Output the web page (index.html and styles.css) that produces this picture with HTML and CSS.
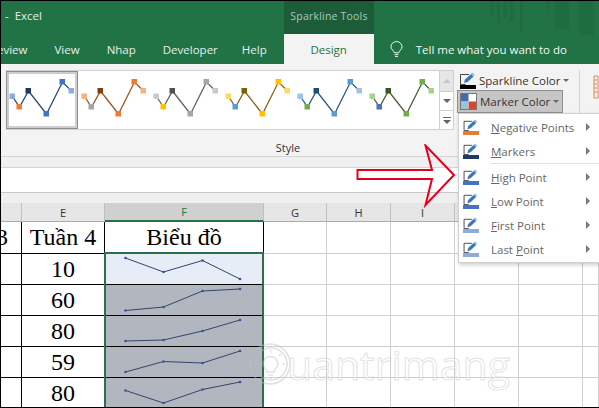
FILE: index.html
```html
<!DOCTYPE html>
<html lang="en">
<head>
  <meta charset="UTF-8" />
  <title>Excel - Marker Color</title>
  <link rel="stylesheet" href="styles.css">
</head>
<body>

  <svg class="defs" width="0" height="0">
    <symbol id="gallery-line" viewBox="0 0 72 56">
      <polyline class="g-line" points="6.500,24.500 13.500,35 22.500,19 40.500,42 56.500,10 65.500,19" />
      <rect class="g-first" x="3.500" y="21.500" width="5.500" height="5.500" />
      <rect class="g-neg" x="10.500" y="32" width="5.500" height="5.500" />
      <rect class="g-mark" x="19.500" y="16" width="5.500" height="5.500" />
      <rect class="g-low" x="37.500" y="39" width="5.500" height="5.500" />
      <rect class="g-low" x="53.500" y="7" width="5.500" height="5.500" />
      <rect class="g-last" x="62.500" y="16" width="5.500" height="5.500" />
    </symbol>
    <symbol id="pencil" viewBox="0 0 16 13">
      <path class="frame" d="M9 2.500H.5v10h5" />
      <path class="nib" d="M4 11l1-3.500 6-5.500 2.600 2.400-6 5.500z" />
      <path class="tip" d="M11 1.500l1-1 2.800 2.300-1 1.300z" />
    </symbol>
  </svg>

  <div class="titlebar">
    <span class="app-name">- &nbsp;Excel</span>
    <div class="tools-label">Sparkline Tools</div>
    <svg class="stripes" width="110" height="34" viewBox="0 0 110 34">
      <path d="M1 0h4v16H1zM8 0h3v22H8zM14 0h4v17h-4zM21 0h4v20h-4zM31 0h3v32h-3zM50 0h6l5 13V0zM66 0h14v28H66zM90 0h15v34H90z" />
    </svg>
  </div>

  <div class="tabs">
    <span class="tab tab-review">eview</span>
    <span class="tab tab-view">View</span>
    <span class="tab tab-nhap">Nhap</span>
    <span class="tab tab-dev">Developer</span>
    <span class="tab tab-help">Help</span>
    <span class="tab tab-design">Design</span>
    <svg class="bulb" width="13" height="17" viewBox="0 0 14 18">
      <path d="M4.500 12.500c0-2-3.500-3.500-3.500-6.500a6 5.500 0 0 1 12 0c0 3-3.500 4.500-3.500 6.500zM5 14.500h4M5.500 16.500h3" />
    </svg>
    <span class="tab tab-tell">Tell me what you want to do</span>
  </div>

  <div class="ribbon">
    <div class="ribbon-main">
      <div class="gallery">
        <div class="gallery-item selected"><svg class="blue-dark" width="72" height="56"><use href="#gallery-line" /></svg></div>
        <div class="gallery-item"><svg class="brown" width="72" height="56"><use href="#gallery-line" /></svg></div>
        <div class="gallery-item"><svg class="grey" width="72" height="56"><use href="#gallery-line" /></svg></div>
        <div class="gallery-item"><svg class="gold" width="72" height="56"><use href="#gallery-line" /></svg></div>
        <div class="gallery-item"><svg class="blue" width="72" height="56"><use href="#gallery-line" /></svg></div>
        <div class="gallery-item"><svg class="green" width="72" height="56"><use href="#gallery-line" /></svg></div>
        <div class="gallery-scroll">
          <div class="scroll-btn up"><span class="tri-up"></span></div>
          <div class="scroll-btn"><span class="tri-down"></span></div>
          <div class="scroll-btn more"><span class="more-bar"></span><span class="tri-down"></span></div>
        </div>
      </div>
      <div class="color-buttons">
        <div class="color-btn">
          <svg class="btn-icon" width="16" height="17" viewBox="0 0 16 17">
            <use href="#pencil" width="16" height="13" />
            <rect y="13" width="16" height="4" fill="#000" />
          </svg>
          <span>Sparkline Color</span><i class="caret"></i>
        </div>
        <div class="color-btn active">
          <svg class="btn-icon" width="17" height="17" viewBox="0 0 17 17">
            <rect x=".5" y=".5" width="16" height="16" fill="#fff" stroke="#777" />
            <rect x="1" y="1" width="7.500" height="7.500" fill="#3f6cad" />
            <rect x="8.500" y="8.500" width="7.500" height="7.500" fill="#d9472b" />
            <rect x="1" y="8.500" width="7.500" height="7.500" fill="#9fc1de" />
          </svg>
          <span>Marker Color</span><i class="caret"></i>
        </div>
      </div>
      <svg class="next-group" width="8" height="24" viewBox="0 0 8 24">
        <path d="M1 1h4v22H1zM1 5h3M1 9h3M1 13h3M1 17h3" />
      </svg>
    </div>
    <div class="group-label">Style</div>
  </div>

  <div class="formula-bar"></div>
  <div class="header-gap"></div>

  <div class="sheet">
    <div class="col-head"></div>
    <div class="col-head">E</div>
    <div class="col-head col-active">F</div>
    <div class="col-head">G</div>
    <div class="col-head">H</div>
    <div class="col-head">I</div>
    <div class="col-head"></div>
    <div class="col-head"></div>
    <div class="col-head col-last"></div>

    <div class="cell data clip-left"><span>Tuần 3</span></div>
    <div class="cell data">Tuần 4</div>
    <div class="cell data">Biểu đồ</div>
    <div class="cell"></div><div class="cell"></div><div class="cell"></div><div class="cell"></div><div class="cell"></div><div class="cell col-last"></div>

    <div class="cell data"></div>
    <div class="cell data">10</div>
    <div class="cell data spark first-spark">
      <svg width="158" height="30"><polyline points="20.500,4 58.500,18 97.500,6.500 135,25" /><circle cx="20.500" cy="4" r="1.300" /><circle cx="58.500" cy="18" r="1.300" /><circle cx="97.500" cy="6.500" r="1.300" /><circle cx="135" cy="25" r="1.300" /></svg>
    </div>
    <div class="cell"></div><div class="cell"></div><div class="cell"></div><div class="cell"></div><div class="cell"></div><div class="cell col-last"></div>

    <div class="cell data"></div>
    <div class="cell data">60</div>
    <div class="cell data spark">
      <svg width="158" height="30"><polyline points="20.500,25.500 58.500,22 97.500,6 135,4" /><circle cx="20.500" cy="25.500" r="1.300" /><circle cx="58.500" cy="22" r="1.300" /><circle cx="97.500" cy="6" r="1.300" /><circle cx="135" cy="4" r="1.300" /></svg>
    </div>
    <div class="cell"></div><div class="cell"></div><div class="cell"></div><div class="cell"></div><div class="cell"></div><div class="cell col-last"></div>

    <div class="cell data"></div>
    <div class="cell data">80</div>
    <div class="cell data spark">
      <svg width="158" height="30"><polyline points="20.500,25 58.500,24 97.500,15 135,4" /><circle cx="20.500" cy="25" r="1.300" /><circle cx="58.500" cy="24" r="1.300" /><circle cx="97.500" cy="15" r="1.300" /><circle cx="135" cy="4" r="1.300" /></svg>
    </div>
    <div class="cell"></div><div class="cell"></div><div class="cell"></div><div class="cell"></div><div class="cell"></div><div class="cell col-last"></div>

    <div class="cell data"></div>
    <div class="cell data">59</div>
    <div class="cell data spark">
      <svg width="158" height="30"><polyline points="20.500,25 58.500,14.500 97.500,16 135,4" /><circle cx="20.500" cy="25" r="1.300" /><circle cx="58.500" cy="14.500" r="1.300" /><circle cx="97.500" cy="16" r="1.300" /><circle cx="135" cy="4" r="1.300" /></svg>
    </div>
    <div class="cell"></div><div class="cell"></div><div class="cell"></div><div class="cell"></div><div class="cell"></div><div class="cell col-last"></div>

    <div class="cell data"></div>
    <div class="cell data">80</div>
    <div class="cell data spark">
      <svg width="158" height="30"><polyline points="20.500,12.500 58.500,25 97.500,11.500 135,4" /><circle cx="20.500" cy="12.500" r="1.300" /><circle cx="58.500" cy="25" r="1.300" /><circle cx="97.500" cy="11.500" r="1.300" /><circle cx="135" cy="4" r="1.300" /></svg>
    </div>
    <div class="cell"></div><div class="cell"></div><div class="cell"></div><div class="cell"></div><div class="cell"></div><div class="cell col-last"></div>
  </div>

  <div class="selection"></div>

  <div class="watermark">
    <svg width="44" height="46" viewBox="0 0 44 46">
      <circle cx="22" cy="23" r="20" />
      <circle cx="23" cy="23" r="16" />
      <path d="M19 31c0-3-4-4-4-8a7.500 7.500 0 0 1 15 0c0 4-4 5-4 8zM20 34h5M21 37h3M22.500 9v3M33 13l-2 2M37 23h-3M12 13l2 2M8 23h3" />
    </svg>
    <span>uantrimang</span>
  </div>

  <div class="menu">
    <div class="menu-item"><svg width="16" height="16" viewBox="0 0 16 16"><use href="#pencil" width="16" height="12" /><rect class="swatch-orange" y="12" width="16" height="4" /></svg><span><u>N</u>egative Points</span><i class="submenu"></i></div>
    <div class="menu-item"><svg width="16" height="16" viewBox="0 0 16 16"><use href="#pencil" width="16" height="12" /><rect class="swatch-navy" y="12" width="16" height="4" /></svg><span><u>M</u>arkers</span><i class="submenu"></i></div>
    <div class="menu-sep"></div>
    <div class="menu-item"><svg width="16" height="16" viewBox="0 0 16 16"><use href="#pencil" width="16" height="12" /><rect class="swatch-blue" y="12" width="16" height="4" /></svg><span><u>H</u>igh Point</span><i class="submenu"></i></div>
    <div class="menu-item"><svg width="16" height="16" viewBox="0 0 16 16"><use href="#pencil" width="16" height="12" /><rect class="swatch-blue" y="12" width="16" height="4" /></svg><span><u>L</u>ow Point</span><i class="submenu"></i></div>
    <div class="menu-item"><svg width="16" height="16" viewBox="0 0 16 16"><use href="#pencil" width="16" height="12" /><rect class="swatch-light" y="12" width="16" height="4" /></svg><span><u>F</u>irst Point</span><i class="submenu"></i></div>
    <div class="menu-item"><svg width="16" height="16" viewBox="0 0 16 16"><use href="#pencil" width="16" height="12" /><rect class="swatch-light" y="12" width="16" height="4" /></svg><span>Last <u>P</u>oint</span><i class="submenu"></i></div>
  </div>

  <svg class="red-arrow" width="100" height="64" viewBox="0 0 100 64">
    <path d="M1.500 26h74.500l-6.500-24.500L98 31 69.500 61l6.500-26H1.500z" />
  </svg>

</body>
</html>
```

FILE: styles.css
```css
:root {
  --green: #217346;
  --green-dark: #1d5c39;
  --ribbon: #f3f3f3;
  --grid: #d0d0d0;
  --head: #e6e6e6;
  --menu-text: #666;
}

* {
  box-sizing: border-box;
}

html, body {
  margin: 0;
  height: 408px;
  overflow: hidden;
}

body {
  position: relative;
  width: 599px;
  font-family: "Open Sans", "Liberation Sans", sans-serif;
  background: #fff;
  border: solid #000;
  border-width: 1px 0 1px 1px;
}

.defs {
  position: absolute;
}

/* title bar and tabs */
.titlebar {
  position: relative;
  display: flex;
  height: 33px;
  padding-left: 4px;
  background: var(--green);
  color: #e6f0ea;
  font-size: 11.5px;
}

.app-name {
  width: 279px;
  line-height: 30px;
}

.tools-label {
  width: 90px;
  padding-top: 8px;
  background: var(--green-dark);
  color: #a9c9b6;
  font-size: 10.5px;
  letter-spacing: .2px;
  text-align: center;
}

.stripes {
  position: absolute;
  top: 0;
  left: 488px;
}

.stripes path {
  fill: #1f6c42;
}

.tabs {
  display: flex;
  align-items: center;
  height: 30px;
  overflow: hidden;
  background: linear-gradient(to right, var(--green) 283px, var(--ribbon) 283px, var(--ribbon) 373px, var(--green) 373px);
  color: #e6f0ea;
  font-size: 11.5px;
  white-space: nowrap;
}

.tab-review { margin-left: -4px; }
.tab-view { margin-left: 27px; }
.tab-nhap { margin-left: 27px; }
.tab-dev { margin-left: 27px; }
.tab-help { margin-left: 24px; }

.tab-design {
  flex: none;
  width: 90px;
  margin-left: 17px;
  color: var(--green);
  text-align: center;
}

.bulb {
  flex: none;
  margin-left: 16px;
}

.bulb path {
  fill: none;
  stroke: #fff;
  stroke-width: 1;
}

.tab-tell {
  margin-left: 13px;
  color: #f2f7f4;
}

/* ribbon */
.ribbon {
  height: 93px;
  background: var(--ribbon);
  border-bottom: 1px solid #d4d4d4;
}

.ribbon-main {
  display: flex;
  height: 71px;
  padding-top: 6px;
}

.gallery {
  display: flex;
  flex: none;
  width: 448px;
  height: 60px;
  margin-left: 5px;
  background: #fff;
  border: 1px solid #d0d0d0;
}

.gallery-item {
  height: 58px;
  padding-top: 1px;
}

.gallery-item svg {
  display: block;
}

.gallery-item.selected {
  width: 72px;
  margin-left: -1px;
  outline: 1px solid #8d8d8d;
  outline-offset: -1px;
  border: 3px solid #cdcdcd;
  padding: 0;
}

.gallery-item.selected svg {
  margin: -2px 0 0 -3px;
}

.g-line {
  fill: none;
  stroke: var(--line);
  stroke-width: 1.300;
}

.g-first { fill: var(--first); }
.g-neg { fill: var(--neg); }
.g-mark { fill: var(--mark); }
.g-low { fill: var(--low); }
.g-last { fill: var(--first); }

.blue-dark { --line: #2f4a75; --first: #8faadc; --neg: #ed7d31; --mark: #1f3864; --low: #4472c4; }
.brown { --line: #a0561f; --first: #f4b183; --neg: #a5a5a5; --mark: #843c0c; --low: #ed7d31; }
.grey { --line: #636363; --first: #c9c9c9; --neg: #ffc000; --mark: #525252; --low: #a5a5a5; }
.gold { --line: #86671a; --first: #ffd966; --neg: #5b9bd5; --mark: #7f6000; --low: #ffc000; }
.blue { --line: #2f5a88; --first: #9dc3e6; --neg: #70ad47; --mark: #1f4e79; --low: #5b9bd5; }
.green { --line: #4b5f35; --first: #a9d18e; --neg: #4472c4; --mark: #385723; --low: #70ad47; }

.gallery-scroll {
  flex: none;
  width: 15px;
  margin: 0 -1px 0 auto;
  border-left: 1px solid #d0d0d0;
  border-right: 1px solid #d0d0d0;
}

.scroll-btn {
  display: flex;
  flex-direction: column;
  align-items: center;
  justify-content: center;
  gap: 2px;
  height: 19px;
  border-bottom: 1px solid #d0d0d0;
}

.scroll-btn.up {
  height: 21px;
  background: #e6e6e6;
}

.scroll-btn.more {
  height: 18px;
  border-bottom: 0;
}

.tri-up {
  border: 4px solid transparent;
  border-top: 0;
  border-bottom-color: #c6c6c6;
}

.tri-down {
  border: 4px solid transparent;
  border-bottom: 0;
  border-top-color: #666;
}

.more-bar {
  width: 8px;
  height: 1px;
  background: #666;
}

.color-buttons {
  flex: none;
  width: 123px;
  height: 46px;
  margin-left: 3px;
  border-right: 1px solid #d4d4d4;
  font-size: 11.5px;
  color: #333;
  white-space: nowrap;
}

.color-btn {
  display: flex;
  align-items: center;
  gap: 3px;
  width: 106px;
  height: 20px;
  padding-left: 3px;
}

.color-btn.active {
  height: 23px;
  background: #c6c6c6;
  border: 1px solid #8e8e8e;
  padding-left: 2px;
}

.btn-icon {
  flex: none;
}

.frame {
  fill: none;
  stroke: #444;
  stroke-width: 1;
}

.nib {
  fill: #3f76b8;
}

.tip {
  fill: #8db4dc;
}

.caret {
  border: 3px solid transparent;
  border-bottom: 0;
  border-top-color: #666;
}

.next-group {
  flex: none;
  margin: 5px 0 0 13px;
}

.next-group path {
  fill: none;
  stroke: #d98a4a;
}

.group-label {
  margin-top: 5px;
  width: 574px;
  text-align: center;
  font-size: 11px;
  color: #333;
}

.formula-bar {
  height: 36px;
  background: linear-gradient(#f0f0f0 10px, #d4d4d4 10px, #d4d4d4 11px, #fff 11px);
  border-bottom: 1px solid #c8c8c8;
}

.header-gap {
  height: 10px;
  background: #f0f0f0;
}

/* worksheet */
.sheet {
  display: grid;
  grid-template-columns: 21px 83px 159px 63px 64px 64px 64px 64px 16px;
  grid-template-rows: 19px 32px repeat(5, 31px);
}

.col-head {
  display: flex;
  align-items: center;
  justify-content: center;
  background: var(--head);
  border-right: 1px solid #c0c0c0;
  border-bottom: 1px solid #ababab;
  font-size: 11px;
  color: #333;
}

.col-head.col-active {
  background: #d0d0d0;
  color: var(--green);
  border-bottom: 2px solid var(--green);
}

.col-last {
  border-right: 0;
}

.cell {
  border-right: 1px solid var(--grid);
  border-bottom: 1px solid var(--grid);
}

.data {
  display: flex;
  align-items: center;
  justify-content: center;
  border-color: #000;
  font-family: "Liberation Serif", serif;
  font-size: 24px;
  color: #000;
  overflow: hidden;
  white-space: nowrap;
}

.clip-left {
  justify-content: flex-end;
}

.clip-left span {
  flex: none;
  margin-right: 13px;
}

.spark {
  background: #b2b6bf;
}

.first-spark {
  background: #e6edf7;
}

.spark svg {
  display: block;
}

.spark polyline {
  fill: none;
  stroke: #33456f;
  stroke-width: 1;
}

.spark circle {
  fill: #33569a;
}

.selection {
  position: absolute;
  top: 251px;
  left: 103px;
  width: 160px;
  height: 158px;
  border: 2px solid #2d6e4f;
  pointer-events: none;
}

.watermark {
  position: absolute;
  top: 340px;
  left: 247px;
  display: flex;
  align-items: flex-end;
  color: #fff;
  font-family: "Open Sans", sans-serif;
  font-size: 41px;
  line-height: 46px;
  opacity: .45;
  -webkit-text-stroke: 1px #c4c4c4;
}

.watermark svg {
  flex: none;
  margin-right: -5px;
}

.watermark circle, .watermark path {
  fill: none;
  stroke: #bdbdbd;
  stroke-width: 1.500;
}

/* dropdown menu */
.menu {
  position: absolute;
  top: 112px;
  left: 457px;
  width: 141px;
  height: 150px;
  padding-top: 1px;
  background: #fff;
  border: 1px solid #d0d0d0;
  border-right: 0;
  box-shadow: 1px 2px 4px rgba(0,0,0,.2);
  font-size: 11.5px;
  color: var(--menu-text);
}

.menu-item {
  display: flex;
  align-items: center;
  height: 24px;
  padding-left: 4px;
}

.menu-item svg {
  flex: none;
  margin-right: 12px;
}

.menu-item span {
  flex: 1;
}

.menu-sep {
  height: 1px;
  margin: 0 0 1px 32px;
  background: #e0e0e0;
}

.submenu {
  margin-right: 9px;
  border: 4px solid transparent;
  border-right: 0;
  border-left-color: #777;
}

.swatch-orange { fill: #e37f32; }
.swatch-navy { fill: #1f3864; }
.swatch-blue { fill: #4472c4; }
.swatch-light { fill: #8faadc; }

.red-arrow {
  position: absolute;
  top: 143px;
  left: 355px;
}

.red-arrow path {
  fill: none;
  stroke: #e3001b;
  stroke-width: 2;
}
```
